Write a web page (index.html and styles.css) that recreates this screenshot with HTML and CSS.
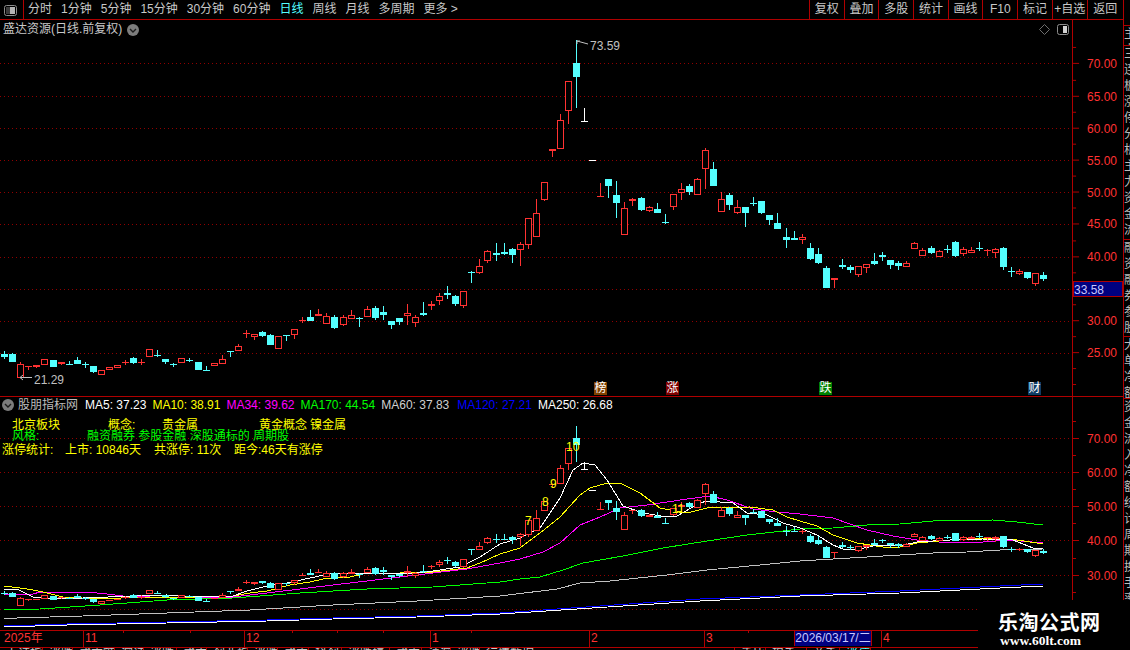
FILE: index.html
```html
<!DOCTYPE html>
<html lang="zh-CN">
<head>
    <meta charset="UTF-8">
    <meta name="viewport" content="width=device-width, initial-scale=1.0">
    <title>盛达资源 日线</title>
    <link rel="stylesheet" href="styles.css">
</head>
<body>
    <div class="toolbar">
        <div class="tool-icon">
            <svg width="14" height="12" viewBox="0 0 14 12">
                <rect x="0.5" y="0.5" width="12" height="10" rx="2" fill="none" stroke="#8c8c8c"/>
                <rect x="6" y="2" width="5" height="7" fill="#b4b4b4"/>
                <rect x="2" y="2" width="4" height="7" fill="#3c3c3c"/>
            </svg>
        </div>
        <div class="tool-left">
            <span>分时</span>
            <span>1分钟</span>
            <span>5分钟</span>
            <span>15分钟</span>
            <span>30分钟</span>
            <span>60分钟</span>
            <span class="active">日线</span>
            <span>周线</span>
            <span>月线</span>
            <span>多周期</span>
            <span>更多 &gt;</span>
        </div>
        <div class="tool-right">
            <span>复权</span>
            <span>叠加</span>
            <span>多股</span>
            <span>统计</span>
            <span>画线</span>
            <span>F10</span>
            <span>标记</span>
            <span>+自选</span>
            <span class="last">返回</span>
        </div>
    </div>

    <div class="main">
        <div class="plot plot-upper">
            <svg id="upperPlot" class="plot-svg" width="1072" height="376" viewBox="0 20 1072 376"></svg>
            <div class="plot-title">
                <span>盛达资源(日线.前复权)</span>
                <svg class="round-icon" width="12" height="12" viewBox="0 0 12 12">
                    <circle cx="6" cy="6" r="6" fill="#7c7c7c"/>
                    <path d="M3 5 L6 8 L9 5" fill="none" stroke="#1c1c1c" stroke-width="1.4"/>
                </svg>
            </div>
            <div class="plot-tools">
                <svg width="11" height="11" viewBox="0 0 11 11">
                    <path d="M5.5 0.5 L10.5 5.5 L5.5 10.5 L0.5 5.5 Z" fill="none" stroke="#6e6e6e"/>
                </svg>
                <svg width="13" height="11" viewBox="0 0 13 11">
                    <rect x="0.5" y="0.5" width="11" height="10" rx="2" fill="none" stroke="#8c8c8c"/>
                    <rect x="6" y="2" width="4" height="7" fill="#d2d2d2"/>
                </svg>
            </div>
            <div class="flags">
                <span class="flag flag-bang">榜</span>
                <span class="flag flag-zhang">涨</span>
                <span class="flag flag-die">跌</span>
                <span class="flag flag-cai">财</span>
            </div>
        </div>
        <svg id="upperAxis" class="axis axis-upper" width="50" height="376" viewBox="1073 20 50 376"></svg>

        <div class="side">
            <div class="side-sec side-a">主力</div>
            <div class="side-sec side-b">三连板涨停分析主力资金流向概念题材</div>
            <div class="side-sec side-c">融资融券参股金融</div>
            <div class="side-sec side-d">大单净额股东人数</div>
            <div class="side-sec side-e">资金流入净额统计周期换手率量比</div>
        </div>

        <div class="plot plot-lower">
            <svg id="lowerPlot" class="plot-svg" width="1072" height="233" viewBox="0 397 1072 233"></svg>
            <div class="legend">
                <svg class="round-icon" width="12" height="12" viewBox="0 0 12 12">
                    <circle cx="6" cy="6" r="6" fill="#7c7c7c"/>
                    <path d="M3 5 L6 8 L9 5" fill="none" stroke="#1c1c1c" stroke-width="1.4"/>
                </svg>
                <span class="legend-name">股朋指标网</span>
                <span class="ma-white">MA5: 37.23</span>
                <span class="ma-yellow">MA10: 38.91</span>
                <span class="ma-magenta">MA34: 39.62</span>
                <span class="ma-green">MA170: 44.54</span>
                <span class="ma-gray">MA60: 37.83</span>
                <span class="ma-blue">MA120: 27.21</span>
                <span class="ma-white">MA250: 26.68</span>
            </div>
            <div class="notes">
                <div class="note-row note-board">
                    <span>北京板块</span>
                    <span>概念:</span>
                    <span>贵金属</span>
                    <span>黄金概念</span>
                    <span>镍金属</span>
                </div>
                <div class="note-row note-style">
                    <span>风格:</span>
                    <span>融资融券 参股金融 深股通标的 周期股</span>
                </div>
                <div class="note-row note-stat">
                    <span>涨停统计:</span>
                    <span>上市: 10846天</span>
                    <span>共涨停: 11次</span>
                    <span>距今:46天有涨停</span>
                </div>
            </div>
        </div>
        <svg id="lowerAxis" class="axis axis-lower" width="50" height="233" viewBox="1073 397 50 233"></svg>
    </div>

    <div id="timeAxis" class="time-axis">
        <div class="time-cell cell-2025">2025年</div>
        <div class="time-cell cell-11">11</div>
        <div class="time-cell cell-12">12</div>
        <div class="time-cell cell-1">1</div>
        <div class="time-cell cell-2">2</div>
        <div class="time-cell cell-3">
            <span class="time-month">3</span>
            <span class="time-cursor">2026/03/17/二</span>
        </div>
        <div class="time-cell cell-4">4</div>
    </div>

    <div class="status-bar">
        <span class="w43">上证指数</span>
        <span class="w30">涨跌</span>
        <span class="w42">成交额</span>
        <span class="w29">深证</span>
        <span class="w33">涨跌</span>
        <span class="w30">成交</span>
        <span class="w41">创业板</span>
        <span class="w30">涨跌</span>
        <span class="w31">成交</span>
        <span class="w33">科创</span>
        <span class="w48">涨跌幅</span>
        <span class="w32">成交</span>
        <span class="w29">沪深</span>
        <span class="w29">涨跌</span>
        <span class="w255">行情数据</span>
        <span class="w31">委比</span>
        <span class="w41">现手</span>
        <span class="w33">总手</span>
        <span class="w31 status-up">涨停</span>
    </div>

    <div class="watermark">
        <div class="watermark-name">乐淘公式网</div>
        <div class="watermark-url">www.60lt.com</div>
    </div>

    <script src="chart.js"></script>
</body>
</html>
```

FILE: styles.css
```css
* {
    box-sizing: border-box;
}
html, body {
    margin: 0;
    padding: 0;
}
body {
    position: relative;
    width: 1130px;
    height: 650px;
    overflow: hidden;
    background-color: #000;
    color: #c8c8c8;
    font-family: "Liberation Sans", "Noto Sans CJK SC", sans-serif;
    font-size: 12px;
}
.toolbar {
    display: flex;
    align-items: stretch;
    height: 20px;
    line-height: 19px;
    padding-right: 6px;
}
.tool-icon {
    width: 24px;
    padding: 4px 0 0 4px;
    border-right: 1px solid #b00000;
    border-bottom: 1px solid #b00000;
}
.tool-left {
    display: flex;
    flex: 1;
    gap: 9px;
    padding-left: 4px;
    border-bottom: 1px solid #b00000;
}
.tool-left .active {
    color: #54ffff;
}
.tool-right {
    display: flex;
    border-bottom: 1px solid #b00000;
}
.tool-right span {
    width: 34.7px;
    text-align: center;
    border-left: 1px solid #b00000;
}
.tool-right .last {
    width: 37.5px;
    border-right: 1px solid #b00000;
}
.main {
    display: grid;
    grid-template-columns: 1073px 51px 6px;
    grid-template-rows: 377px 233px;
}
.plot {
    position: relative;
    border-right: 1px solid #b00000;
    overflow: hidden;
}
.plot-upper {
    border-bottom: 1px solid #b00000;
}
.plot-svg {
    display: block;
}
.axis {
    display: block;
    border-right: 1px solid #b00000;
    width: 51px;
}
.axis-upper {
    height: 377px;
    border-bottom: 1px solid #b00000;
    padding-bottom: 1px;
}
.axis-lower {
    height: 233px;
}
.side {
    grid-column: 3;
    grid-row: 1 / 3;
    overflow: hidden;
    color: #bcbcbc;
    padding-top: 5px;
}
.side-sec {
    width: 13px;
    line-height: 16px;
    overflow: hidden;
    border-top: 1px solid #b00000;
}
.side-a {
    height: 20px;
}
.side-b {
    height: 194px;
}
.side-c {
    height: 97px;
}
.side-d {
    height: 62px;
}
.side-e {
    height: 232px;
}
.plot-title {
    position: absolute;
    top: 1px;
    left: 3px;
    display: flex;
    align-items: center;
    gap: 5px;
    line-height: 17px;
}
.round-icon {
    display: block;
}
.plot-tools {
    position: absolute;
    top: 4px;
    right: 2px;
    display: flex;
    gap: 7px;
}
.flags {
    position: absolute;
    bottom: 1px;
    left: 0;
    display: flex;
}
.flag {
    width: 13px;
    height: 13px;
    line-height: 13px;
    text-align: center;
    color: #fff;
}
.flag-bang {
    margin-left: 594px;
    background-color: #804000;
}
.flag-zhang {
    margin-left: 59px;
    background-color: #800000;
}
.flag-die {
    margin-left: 140px;
    background-color: #008000;
}
.flag-cai {
    margin-left: 196px;
    background-color: #103c64;
}
.legend {
    position: absolute;
    top: 1px;
    left: 2px;
    display: flex;
    align-items: center;
    gap: 6px;
    line-height: 14px;
    white-space: nowrap;
}
.legend-name {
    margin-left: -2px;
    color: #bcbcbc;
    margin-right: 1px;
}
.ma-white {
    color: #fff;
}
.ma-yellow {
    color: #ffff00;
}
.ma-magenta {
    color: #ff00ff;
}
.ma-green {
    color: #00ff00;
}
.ma-gray {
    color: #d0d0d0;
}
.ma-blue {
    color: #0000ff;
    margin-left: 2px;
}
.notes {
    position: absolute;
    top: 21px;
    left: 0;
    white-space: nowrap;
}
.note-row {
    display: flex;
    height: 14px;
    line-height: 14px;
}
.note-board {
    padding-left: 12px;
    height: 11px;
    color: #ffff00;
}
.note-board span:nth-child(1) {
    width: 96px;
}
.note-board span:nth-child(2) {
    width: 54px;
}
.note-board span:nth-child(3) {
    width: 97px;
}
.note-board span:nth-child(4) {
    width: 51px;
}
.note-style {
    padding-left: 12px;
    color: #00ff00;
    height: 14px;
}
.note-style span:nth-child(1) {
    width: 75px;
}
.note-stat {
    padding-left: 2px;
    color: #ffff00;
}
.note-stat span:nth-child(1) {
    width: 63px;
}
.note-stat span:nth-child(2) {
    width: 89px;
}
.note-stat span:nth-child(3) {
    width: 80px;
}
.time-axis {
    position: relative;
    display: flex;
    width: 978px;
    height: 17px;
    border-top: 1px solid #b00000;
    color: #ff3232;
    line-height: 15px;
}
.time-cell {
    padding-left: 1px;
    border-left: 1px solid #b00000;
}
.cell-2025 {
    width: 83px;
    padding-left: 4px;
    border-left: 0;
}
.cell-11 {
    width: 161px;
}
.cell-12 {
    width: 186px;
}
.cell-1 {
    width: 159px;
}
.cell-2 {
    width: 115px;
}
.cell-3 {
    display: flex;
    width: 177px;
}
.cell-4 {
    width: 97px;
}
.time-month {
    width: 88px;
}
.time-cursor {
    width: 78px;
    height: 15px;
    background-color: #000080;
    color: #c8c8ff;
    text-align: center;
    border-left: 1px solid #b00000;
    border-right: 1px solid #b00000;
    white-space: nowrap;
}
.time-tick {
    position: absolute;
    top: 0;
    width: 1px;
    height: 2px;
    background-color: #b00000;
}
.status-bar {
    display: flex;
    width: 978px;
    height: 3px;
    overflow: hidden;
    border-top: 1px solid #b00000;
    line-height: 12px;
    color: #c8c8c8;
}
.status-bar span {
    padding-left: 6px;
    border-right: 1px solid #b00000;
    overflow: hidden;
    white-space: nowrap;
}
.status-bar .status-up {
    color: #54ffff;
}
.w29 { width: 29px; }
.w30 { width: 30px; }
.w31 { width: 31px; }
.w32 { width: 32px; }
.w33 { width: 33px; }
.w41 { width: 41px; }
.w42 { width: 42px; }
.w43 { width: 43px; }
.w48 { width: 48px; }
.w255 { width: 255px; }
.watermark {
    position: absolute;
    right: 0;
    bottom: 0;
    width: 152px;
    height: 50px;
    padding: 9px 0 0 20px;
    background-color: #000;
    color: #fff;
    font-weight: bold;
}
.watermark-name {
    font-size: 20px;
    line-height: 26px;
    letter-spacing: 0.5px;
    font-family: "Noto Sans CJK SC", sans-serif;
}
.watermark-url {
    margin-left: 2px;
    font-family: "Liberation Serif", serif;
    font-size: 13.5px;
    line-height: 12px;
}
```

FILE: chart.js
```js
// [high, top, bottom, low, kind] in pixel rows of the upper panel
const CANDLES = [
    [351, 354, 357, 359, 'c'], [353, 354, 362, 362, 'c'], [362, 364, 378, 378, 'r'], [366, 366, 367, 370, 'r'],
    [365, 365, 367, 368, 'r'], [359, 359, 365, 365, 'r'], [360, 360, 367, 367, 'c'], [362, 362, 364, 365, 'r'],
    [361, 364, 365, 365, 'c'], [357, 360, 364, 364, 'c'], [362, 364, 365, 368, 'c'], [366, 366, 372, 373, 'c'],
    [370, 370, 375, 375, 'r'], [367, 367, 370, 370, 'r'], [365, 365, 368, 368, 'r'], [360, 362, 363, 365, 'r'],
    [357, 358, 363, 364, 'c'], [359, 362, 363, 365, 'r'], [349, 349, 357, 357, 'r'], [350, 355, 356, 357, 'c'],
    [359, 359, 362, 364, 'c'], [363, 364, 365, 367, 'c'], [358, 358, 363, 363, 'r'], [358, 360, 361, 362, 'c'],
    [362, 362, 370, 370, 'c'], [366, 370, 371, 371, 'c'], [363, 363, 366, 366, 'r'], [355, 359, 364, 364, 'r'],
    [351, 351, 352, 357, 'c'], [344, 346, 351, 351, 'r'], [330, 333, 334, 338, 'r'], [334, 334, 337, 340, 'r'],
    [331, 332, 336, 337, 'c'], [334, 335, 345, 345, 'c'], [336, 336, 349, 349, 'r'], [335, 335, 336, 341, 'c'],
    [329, 329, 335, 339, 'r'], [317, 320, 321, 323, 'r'], [310, 317, 321, 321, 'c'], [309, 314, 316, 316, 'r'],
    [313, 316, 324, 324, 'r'], [315, 317, 328, 329, 'c'], [315, 317, 325, 326, 'r'], [310, 315, 319, 319, 'r'],
    [317, 318, 319, 327, 'c'], [306, 309, 317, 317, 'r'], [306, 308, 318, 320, 'c'], [306, 312, 315, 320, 'c'],
    [321, 321, 325, 329, 'c'], [318, 318, 322, 325, 'c'], [304, 313, 316, 325, 'r'], [315, 317, 323, 327, 'r'],
    [302, 313, 315, 316, 'c'], [301, 304, 306, 310, 'r'], [293, 296, 301, 305, 'r'], [286, 293, 295, 299, 'c'],
    [295, 296, 304, 306, 'c'], [291, 291, 306, 308, 'r'], [271, 272, 273, 283, 'c'], [259, 266, 273, 274, 'r'],
    [250, 251, 261, 263, 'r'], [243, 253, 255, 261, 'c'], [243, 252, 254, 255, 'c'], [248, 249, 255, 263, 'c'],
    [242, 244, 250, 266, 'r'], [218, 218, 245, 249, 'r'], [199, 213, 237, 237, 'r'], [182, 182, 200, 201, 'r'],
    [149, 149, 151, 157, 'r'], [114, 120, 149, 149, 'r'], [81, 81, 111, 124, 'r'], [40, 63, 77, 108, 'c'],
    [108, 121, 122, 122, 'w'], [160, 160, 161, 161, 'w'], [183, 196, 197, 197, 'r'], [179, 179, 186, 198, 'c'],
    [181, 195, 203, 218, 'c'], [202, 208, 235, 235, 'r'], [198, 199, 201, 206, 'r'], [197, 198, 210, 211, 'c'],
    [206, 207, 211, 212, 'r'], [203, 209, 213, 213, 'c'], [214, 222, 223, 224, 'c'], [194, 194, 207, 210, 'r'],
    [183, 189, 193, 200, 'r'], [184, 186, 192, 195, 'c'], [178, 179, 195, 195, 'r'], [148, 150, 169, 189, 'r'],
    [162, 169, 186, 186, 'c'], [192, 199, 212, 212, 'r'], [193, 195, 205, 210, 'c'], [200, 207, 213, 214, 'r'],
    [207, 207, 213, 227, 'c'], [197, 203, 204, 206, 'c'], [201, 201, 213, 214, 'c'], [215, 215, 220, 225, 'c'],
    [213, 223, 229, 229, 'c'], [228, 237, 240, 248, 'c'], [231, 238, 240, 240, 'c'], [234, 237, 240, 244, 'r'],
    [243, 248, 259, 260, 'c'], [248, 254, 263, 264, 'c'], [266, 268, 288, 288, 'c'], [278, 278, 280, 288, 'r'],
    [259, 265, 267, 269, 'c'], [265, 267, 270, 273, 'c'], [266, 266, 275, 277, 'r'], [264, 264, 268, 273, 'r'],
    [253, 261, 264, 265, 'c'], [252, 255, 257, 261, 'c'], [260, 260, 265, 269, 'c'], [261, 263, 266, 270, 'c'],
    [261, 263, 267, 267, 'r'], [242, 243, 249, 249, 'r'], [248, 250, 256, 256, 'r'], [246, 248, 253, 254, 'c'],
    [250, 251, 257, 257, 'r'], [245, 249, 250, 253, 'c'], [241, 242, 256, 257, 'c'], [247, 249, 254, 256, 'r'],
    [247, 250, 253, 253, 'r'], [242, 248, 249, 251, 'c'], [249, 250, 251, 256, 'r'], [248, 249, 253, 258, 'r'],
    [247, 248, 267, 270, 'c'], [267, 271, 272, 277, 'c'], [269, 271, 274, 275, 'r'], [272, 272, 278, 279, 'c'],
    [273, 273, 284, 286, 'r'], [272, 275, 279, 281, 'c']
];

const COLORS = { r: '#ff3232', c: '#54ffff', w: '#ffffff' };

const LINES = [
    ['#0000ff', [[4, 626], [67, 624], [167, 622], [267, 620], [333, 618], [417, 616], [500, 613], [700, 599], [800, 595], [900, 591], [1000, 586], [1043, 584]]],
    ['#ffffff', [[4, 627], [67, 625], [167, 623], [267, 621], [333, 619], [417, 617], [500, 614], [700, 601], [800, 596], [900, 593], [1000, 588], [1043, 586]]],
    ['#c0c0c0', [[4, 619], [17, 618], [83, 616], [167, 613], [250, 610], [333, 605], [417, 601], [500, 596], [557, 589], [580, 583], [610, 581], [667, 575], [707, 570], [760, 565], [800, 561], [833, 559], [867, 557], [900, 555], [933, 553], [967, 552], [1000, 550], [1043, 549]]],
    ['#00ff00', [[4, 610], [40, 609], [100, 605], [167, 600], [233, 598], [300, 593], [367, 589], [433, 587], [500, 582], [520, 579], [540, 577], [563, 570], [583, 563], [623, 556], [663, 548], [707, 541], [747, 535], [783, 531], [800, 529], [833, 528], [867, 525], [900, 524], [933, 521], [993, 520], [1017, 522], [1043, 525]]],
    ['#ff00ff', [[4, 594], [33, 594], [40, 592], [87, 592], [107, 594], [123, 596], [150, 597], [200, 598], [233, 597], [267, 593], [300, 589], [333, 585], [367, 581], [400, 577], [433, 573], [467, 569], [500, 563], [520, 559], [543, 552], [560, 543], [580, 525], [600, 517], [620, 508], [647, 505], [687, 499], [710, 496], [727, 500], [753, 509], [777, 512], [800, 514], [833, 518], [867, 530], [893, 536], [917, 540], [950, 543], [983, 542], [1010, 540], [1043, 543]]],
    ['#ffff00', [[4, 586], [20, 588], [33, 590], [43, 592], [63, 597], [100, 599], [143, 597], [200, 597], [233, 596], [250, 593], [267, 591], [290, 585], [310, 582], [323, 579], [350, 577], [367, 573], [400, 573], [433, 572], [467, 568], [480, 563], [500, 554], [520, 548], [540, 533], [560, 517], [580, 495], [590, 488], [607, 483], [620, 483], [640, 493], [660, 508], [687, 513], [707, 508], [750, 507], [773, 510], [787, 517], [800, 521], [817, 526], [833, 535], [857, 543], [883, 547], [900, 547], [917, 543], [950, 540], [983, 538], [1017, 540], [1043, 544]]],
    ['#ffffff', [[4, 589], [17, 589], [33, 597], [43, 598], [83, 598], [133, 596], [167, 595], [200, 597], [233, 596], [247, 591], [267, 586], [287, 583], [310, 578], [333, 573], [367, 573], [417, 573], [433, 571], [460, 567], [480, 557], [500, 544], [520, 538], [540, 528], [560, 498], [573, 470], [583, 463], [595, 465], [607, 480], [623, 506], [643, 513], [667, 517], [677, 516], [700, 503], [707, 501], [733, 503], [747, 513], [767, 515], [783, 523], [800, 528], [817, 535], [833, 545], [843, 549], [860, 549], [877, 545], [900, 546], [917, 542], [950, 540], [983, 539], [1013, 540], [1033, 548], [1043, 549]]]
];

const SVG_NS = 'http://www.w3.org/2000/svg';

const UPPER_MAJOR = [[70, 63], [65, 96], [60, 128], [55, 160], [50, 192], [45, 224], [40, 257], [35, 289], [30, 321], [25, 353]];
const UPPER_MINOR = [47, 80, 112, 144, 176, 208, 241, 273, 305, 337, 369, 385];
const LOWER_MAJOR = [[70, 438], [60, 472], [50, 506], [40, 540], [30, 575], [20, 609]];
const LOWER_MINOR = [421, 455, 489, 523, 558, 592];

function add(parent, name, attrs, text) {
    const el = document.createElementNS(SVG_NS, name);
    Object.keys(attrs).forEach(key => el.setAttribute(key, attrs[key]));
    if (text) {
        el.textContent = text;
    }
    parent.appendChild(el);
    return el;
}

function drawGrid(svg, rows) {
    rows.forEach(row => {
        add(svg, 'line', { x1: 0, x2: 1072, y1: row[1] + 0.5, y2: row[1] + 0.5, stroke: '#900000', 'stroke-dasharray': '1 3' });
    });
}

function drawCandles(svg, mapY) {
    CANDLES.forEach((candle, i) => {
        const x = Math.round(4.2 + 8.055 * i);
        const high = mapY(candle[0]);
        const top = mapY(candle[1]);
        const bottom = Math.max(mapY(candle[2]), top + 1);
        const low = Math.max(mapY(candle[3]), bottom);
        const color = COLORS[candle[4]];

        add(svg, 'rect', { x: x, y: high, width: 1, height: low - high, fill: color, 'shape-rendering': 'crispEdges' });
        if (candle[4] === 'c' || bottom - top < 3) {
            add(svg, 'rect', { x: x - 3, y: top, width: 7, height: bottom - top, fill: color, 'shape-rendering': 'crispEdges' });
        } else {
            add(svg, 'rect', { x: x - 2.5, y: top + 0.5, width: 6, height: bottom - top - 1, fill: '#000', stroke: color, 'shape-rendering': 'crispEdges' });
        }
    });
}

function drawAxis(svg, major, minor, hidden) {
    major.forEach(row => {
        add(svg, 'rect', { x: 1073, y: row[1], width: 6, height: 1, fill: '#b00000' });
        if (!hidden.includes(row[0])) {
            add(svg, 'text', { x: 1087, y: row[1] + 5, fill: '#ff3232', 'font-size': 12 }, row[0].toFixed(2));
        }
    });
    minor.forEach(y => {
        add(svg, 'rect', { x: 1073, y: y, width: 3, height: 1, fill: '#b00000' });
    });
}

function label(svg, x, y, text, color) {
    add(svg, 'text', { x: x, y: y, fill: color, 'font-size': 12 }, text);
}

const upperPlot = document.getElementById('upperPlot');
drawGrid(upperPlot, UPPER_MAJOR);
drawCandles(upperPlot, y => y);

// high and low price marks
add(upperPlot, 'path', { d: 'M577 44 V41 H580 M577 41 L588 44', fill: 'none', stroke: '#c0c0c0' });
label(upperPlot, 590, 50, '73.59', '#c0c0c0');
add(upperPlot, 'path', { d: 'M32 377.5 H20 M23 375 L20 377.5 L23 380', fill: 'none', stroke: '#c0c0c0' });
label(upperPlot, 34, 384, '21.29', '#c0c0c0');

const lowerPlot = document.getElementById('lowerPlot');
drawGrid(lowerPlot, LOWER_MAJOR);
LINES.forEach(line => {
    add(lowerPlot, 'polyline', {
        points: line[1].map(p => p.join(',')).join(' '),
        fill: 'none',
        stroke: line[0],
        'shape-rendering': 'crispEdges'
    });
});
drawCandles(lowerPlot, y => Math.round(438 + (y - 63) * 0.532));

// limit-up counters
[[525, 525, '7'], [542, 506, '8'], [550, 488, '9'], [566, 451, '10'], [672, 513, '11']].forEach(item => {
    label(lowerPlot, item[0], item[1], item[2], '#ffff00');
});

const upperAxis = document.getElementById('upperAxis');
drawAxis(upperAxis, UPPER_MAJOR, UPPER_MINOR, [35]);
add(upperAxis, 'rect', { x: 1073, y: 282.5, width: 50, height: 15, fill: '#000080', stroke: '#b00000', 'shape-rendering': 'crispEdges' });
label(upperAxis, 1074, 295, '33.58', '#c8c8ff');

drawAxis(document.getElementById('lowerAxis'), LOWER_MAJOR, LOWER_MINOR, [20]);

const timeAxis = document.getElementById('timeAxis');
[123, 190, 292, 337, 383, 471, 748].forEach(x => {
    const tick = document.createElement('span');
    tick.className = 'time-tick';
    tick.style.left = x + 'px';
    timeAxis.appendChild(tick);
});
```
